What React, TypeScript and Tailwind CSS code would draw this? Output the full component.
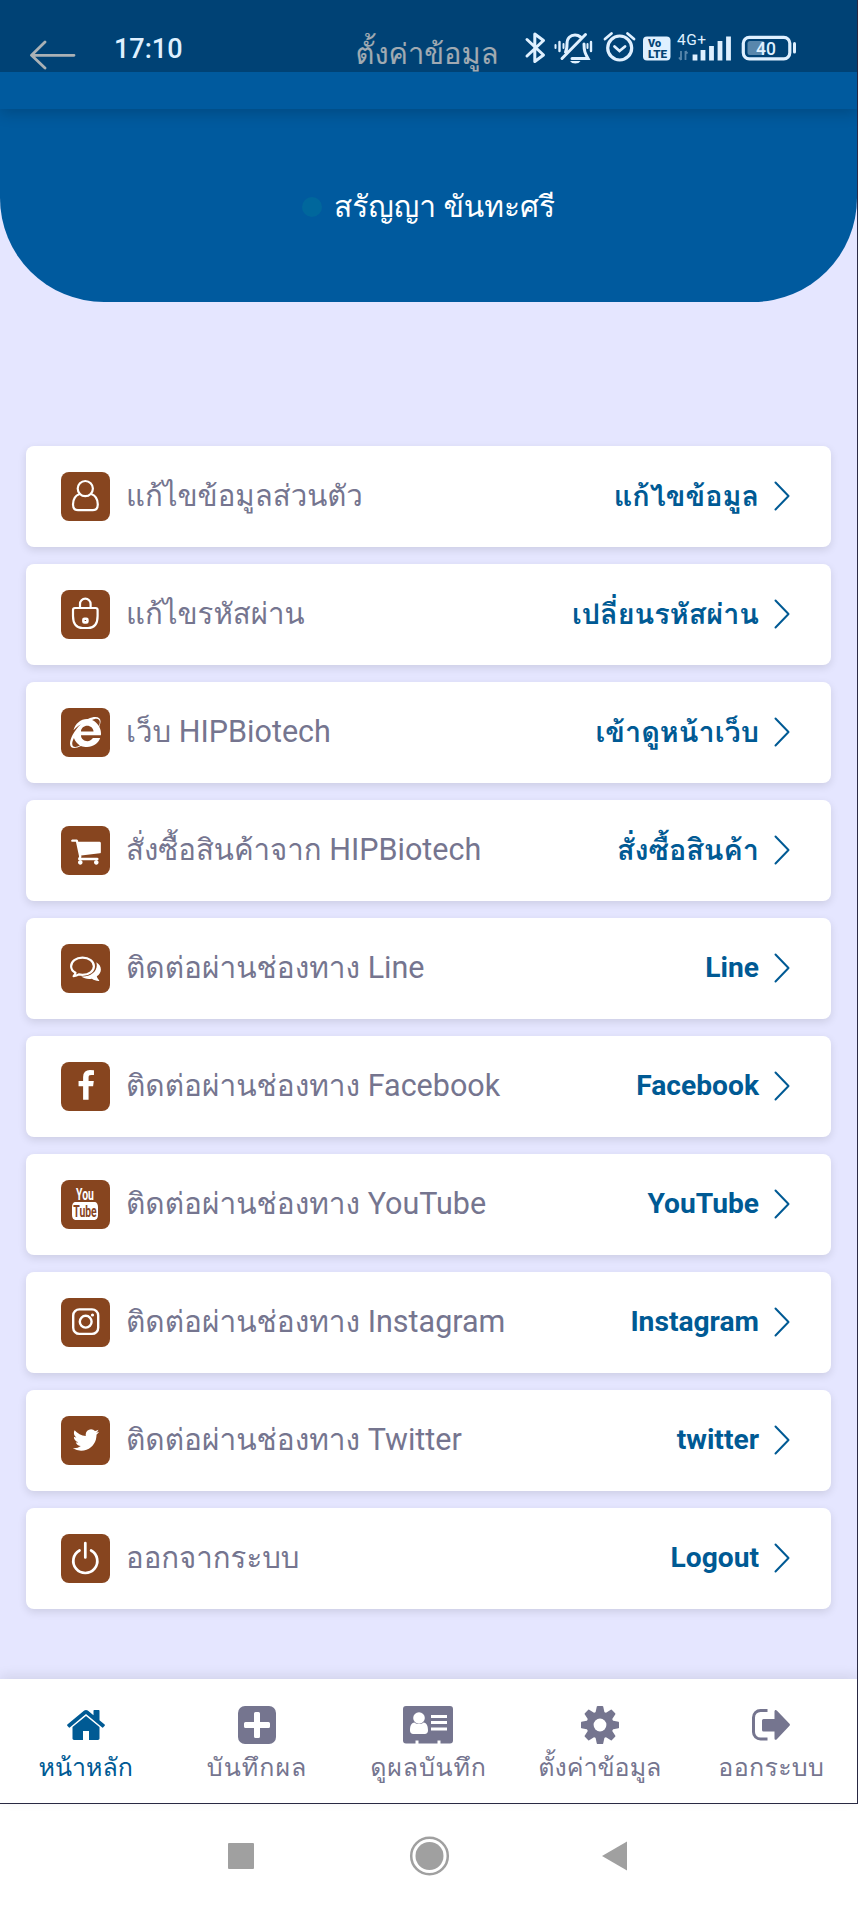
import type { ReactNode } from 'react';
import { FaInternetExplorer } from 'react-icons/fa';

const stroke = {
  fill: 'none',
  stroke: 'currentColor',
  strokeLinecap: 'round' as const,
  strokeLinejoin: 'round' as const,
};

const UserIcon = () => (
  <svg viewBox="0 0 49 49" className="h-full w-full" {...stroke} strokeWidth="2.2">
    <circle cx="24.3" cy="16.6" r="7.6" />
    <path d="M18.6 22c-4.500 1.600-6.600 5.500-6.600 10.500 0 3.400 1.800 5.600 5 5.600h14.800c3.200 0 5-2.200 5-5.600 0-5-2.100-8.900-6.600-10.500" />
  </svg>
);

const LockIcon = () => (
  <svg viewBox="0 0 49 49" className="h-full w-full" {...stroke} strokeWidth="2.2">
    <path d="M19 17v-3a5.300 5.300 0 0 1 10.600 0v3" />
    <path d="M14 18h20.600a2 2 0 0 1 2 2v6c0 8-3.600 12-9.600 12h-5.400c-6 0-9.600-4-9.600-12v-6a2 2 0 0 1 2-2z" />
    <rect x="22.400" y="28.800" width="4" height="3.600" rx="1" strokeWidth="2.600" />
  </svg>
);

const CartIcon = () => (
  <svg viewBox="0 0 1792 1792" className="h-[32px] w-[32px]" fill="currentColor">
    <path d="M704 1536q0 52-38 90t-90 38-90-38-38-90 38-90 90-38 90 38 38 90zm896 0q0 52-38 90t-90 38-90-38-38-90 38-90 90-38 90 38 38 90zm128-1088v512q0 24-16.500 42.500t-40.500 21.500l-1044 122q13 60 13 70 0 16-24 64h920q26 0 45 19t19 45-19 45-45 19h-1024q-26 0-45-19t-19-45q0-11 8-31.500t16-36 21.500-40 15.500-29.500l-177-823h-204q-26 0-45-19t-19-45 19-45 45-19h256q16 0 28.500 6.500t19.500 15.500 13 24.500 8 26 5.500 29.500 4.500 26h1201q26 0 45 19t19 45z" />
  </svg>
);

const ChatIcon = () => (
  <svg viewBox="0 0 49 49" className="h-full w-full" fill="currentColor">
    <path
      d="M21.500 13.600c6.600 0 11.400 3.900 11.400 8.600s-4.800 8.600-11.400 8.600c-1.400 0-2.500-.1-3.700-.4-1.700 1.200-3.400 1.600-5.200 1.800 1-1 1.600-2 1.900-3.400-2.800-1.600-4.400-4-4.400-6.600 0-4.700 4.800-8.600 11.400-8.600z"
      fill="none"
      stroke="currentColor"
      strokeWidth="2.200"
      strokeLinejoin="round"
    />
    <path d="M35.200 18.200c2.900 1.700 4.700 4.200 4.700 7.200 0 2.800-1.500 5.200-4.100 6.900.3 1.500 1 2.700 2.400 3.900.2.300 0 .8-.5.800-2.600-.1-4.800-.9-6.800-2.200-4.400.6-7.800-.2-10.700-2.300 8.800.5 15.600-4.300 15.600-11.200 0-1.100-.2-2.100-.6-3.100z" />
  </svg>
);

const FacebookIcon = () => (
  <svg viewBox="0 0 1792 1792" className="mb-[2px] h-[32px] w-[32px]" fill="currentColor">
    <path d="M1343 12v264h-157q-86 0-116 36t-30 108v189h293l-39 296h-254v759h-306v-759h-255v-296h255v-218q0-186 104-288.500t277-102.500q147 0 228 12z" />
  </svg>
);

const YouTubeIcon = () => (
  <div className="mr-[1px] mb-[2px] flex w-[40px] shrink-0 scale-x-[0.65] flex-col items-center text-[16px] leading-none font-bold">
    <span className="h-[14px] leading-[13px]">You</span>
    <span className="h-[18px] w-[40px] rounded-[5px] bg-white text-center leading-[19px] text-[#87451f]">Tube</span>
  </div>
);

const InstagramIcon = () => (
  <svg viewBox="0 0 49 49" className="h-full w-full" {...stroke} strokeWidth="2.400">
    <rect x="12.200" y="11.400" width="25" height="24.500" rx="6.200" />
    <circle cx="24.700" cy="23.700" r="5.900" />
    <circle cx="31.500" cy="17" r="1.600" fill="currentColor" stroke="none" />
  </svg>
);

const TwitterIcon = () => (
  <svg viewBox="0 0 1792 1792" className="mb-[2px] h-[30px] w-[30px]" fill="currentColor">
    <path d="M1684 408q-67 98-162 167 1 14 1 42 0 130-38 259.500t-115.500 248.500-184.500 210.500-258 146-323 54.500q-271 0-496-145 35 4 78 4 225 0 401-138-105-2-188-64.500t-114-159.500q33 5 61 5 43 0 85-11-112-23-185.500-111.500t-73.500-205.500v-4q68 38 146 41-66-44-105-115t-39-154q0-88 44-163 121 149 294.500 238.500t371.500 99.500q-8-38-8-74 0-134 94.500-228.500t228.500-94.500q140 0 236 102 109-21 205-78-37 115-142 178 93-10 186-50z" />
  </svg>
);

const PowerIcon = () => (
  <svg viewBox="0 0 49 49" className="h-full w-full" {...stroke} strokeWidth="2.700">
    <path d="M24.300 9v14.500M18.500 16.500a12 12 0 1 0 11.600 0" />
  </svg>
);

type Item = { icon: ReactNode; label: string; latin?: string; action: string; thaiAction?: boolean };

const items: Item[] = [
  { icon: <UserIcon />, label: 'แก้ไขข้อมูลส่วนตัว', action: 'แก้ไขข้อมูล', thaiAction: true },
  { icon: <LockIcon />, label: 'แก้ไขรหัสผ่าน', action: 'เปลี่ยนรหัสผ่าน', thaiAction: true },
  { icon: <FaInternetExplorer size={31} />, label: 'เว็บ', latin: 'HIPBiotech', action: 'เข้าดูหน้าเว็บ', thaiAction: true },
  { icon: <CartIcon />, label: 'สั่งซื้อสินค้าจาก', latin: 'HIPBiotech', action: 'สั่งซื้อสินค้า', thaiAction: true },
  { icon: <ChatIcon />, label: 'ติดต่อผ่านช่องทาง', latin: 'Line', action: 'Line' },
  { icon: <FacebookIcon />, label: 'ติดต่อผ่านช่องทาง', latin: 'Facebook', action: 'Facebook' },
  { icon: <YouTubeIcon />, label: 'ติดต่อผ่านช่องทาง', latin: 'YouTube', action: 'YouTube' },
  { icon: <InstagramIcon />, label: 'ติดต่อผ่านช่องทาง', latin: 'Instagram', action: 'Instagram' },
  { icon: <TwitterIcon />, label: 'ติดต่อผ่านช่องทาง', latin: 'Twitter', action: 'twitter' },
  { icon: <PowerIcon />, label: 'ออกจากระบบ', action: 'Logout' },
];

const HomeIcon = () => (
  <svg viewBox="0 0 1792 1792" className="h-[42px] w-[42px]" fill="currentColor">
    <path d="M1472 992v480q0 26-19 45t-45 19h-384v-384h-256v384h-384q-26 0-45-19t-19-45v-480q0-1 .5-3t.5-3l575-474 575 474q1 2 1 6zm223-69l-62 74q-8 9-21 11h-3q-13 0-21-7l-692-577-692 577q-12 8-24 7-13-2-21-11l-62-74q-8-10-7-23.500t11-21.500l719-599q32-26 76-26t76 26l244 204v-195q0-14 9-23t23-9h192q14 0 23 9t9 23v408l219 182q10 8 11 21.500t-7 23.500z" />
  </svg>
);

const PlusIcon = () => (
  <svg viewBox="0 0 38 38" className="h-[38px] w-[38px]" fill="currentColor">
    <rect width="38" height="38" rx="7" />
    <path d="M16 7.500a1.500 1.500 0 0 1 1.500-1.500h3A1.500 1.500 0 0 1 22 7.500V16h8.500a1.500 1.500 0 0 1 1.500 1.500v3a1.500 1.500 0 0 1-1.500 1.500H22v8.500a1.500 1.500 0 0 1-1.500 1.500h-3a1.500 1.500 0 0 1-1.500-1.500V22H7.500A1.500 1.500 0 0 1 6 20.500v-3A1.500 1.500 0 0 1 7.500 16H16z" fill="#fff" />
  </svg>
);

const CardIcon = () => (
  <svg viewBox="0 0 50 38" className="h-[38px] w-[50px]" fill="currentColor">
    <path d="M3 0h44a3 3 0 0 1 3 3v31.500a3 3 0 0 1-3 3h-9.500v-3h-3v3h-19v-3h-3v3H3a3 3 0 0 1-3-3V3a3 3 0 0 1 3-3z" />
    <g fill="#fff">
      <circle cx="16" cy="12" r="5.800" />
      <path d="M11.500 16.500c1.200 1 2.700 1.600 4.500 1.600s3.300-.6 4.500-1.600c3.300.4 4.500 3.500 4.500 8 0 2-1.300 3.500-3.200 3.500H10.200C8.300 28 7 26.500 7 24.500c0-4.500 1.200-7.600 4.500-8z" />
      <path d="M28 9h16v3H28zM28 15h16v3H28zM28 21.500h16v3H28z" />
    </g>
  </svg>
);

const GearIcon = () => (
  <svg viewBox="-19 -19 38 38" className="h-[38px] w-[38px]" fill="currentColor">
    {[0, 45, 90, 135].map((angle) => (
      <path
        key={angle}
        transform={`rotate(${angle})`}
        d="M-3.200-18.500q.2-.5.800-.5h4.800q.6 0 .8.500l1.400 6.500v24l-1.400 6.500q-.2.500-.8.500h-4.800q-.6 0-.8-.5l-1.400-6.500v-24z"
      />
    ))}
    <circle r="13.600" />
    <circle r="6.400" fill="#fff" />
  </svg>
);

const ExitIcon = () => (
  <svg viewBox="0 0 38 32" className="h-[32px] w-[38px]" fill="currentColor">
    <path d="M15.500 1.500H8.500a7 7 0 0 0-7 7v14.500a7 7 0 0 0 7 7h7" fill="none" stroke="currentColor" strokeWidth="3" />
    <path d="M22.500 2.500c0-1.600 1.200-2 2.300-1L37.500 14.800q.9 1 0 2L24.800 30.300c-1.100 1-2.300.6-2.300-1V22.500h-11a1.500 1.500 0 0 1-1.500-1.500V11.500a1.500 1.500 0 0 1 1.500-1.500h11z" />
  </svg>
);

const tabs = [
  { icon: <HomeIcon />, label: 'หน้าหลัก', color: 'text-[#005a94]', tracking: 'tracking-normal' },
  { icon: <PlusIcon />, label: 'บันทึกผล', color: 'text-[#75758f]', tracking: 'tracking-[1px]' },
  { icon: <CardIcon />, label: 'ดูผลบันทึก', color: 'text-[#75758f]', tracking: 'tracking-[0.8px]' },
  { icon: <GearIcon />, label: 'ตั้งค่าข้อมูล', color: 'text-[#75758f]', tracking: 'tracking-normal' },
  { icon: <ExitIcon />, label: 'ออกระบบ', color: 'text-[#75758f]', tracking: 'tracking-[0.3px]' },
];

function StatusBar() {
  return (
    <div className="absolute inset-x-0 top-0 flex h-[72px] items-start bg-black/26 text-[#dff0ff]">
      <span className="mt-[32px] ml-[114px] w-[405px] text-[27px] leading-[34px] font-medium">17:10</span>
      <svg width="290" height="72" viewBox="520 0 290 72" fill="none" stroke="currentColor">
        {/* bluetooth */}
        <path d="M528 39.500l16.500 15.500-8.700 6.500V34l8.700 6.500L528 56" strokeWidth="3" strokeLinejoin="round" strokeLinecap="round" />
        {/* muted bell */}
        <g strokeWidth="3" strokeLinecap="round">
          <path d="M566.500 52c1.500-2.500 1.500-4.500 1.500-8 0-6 3.500-9 8-9 2 0 4 .7 5.500 2M585 44c0 7 1 9 4 14.500h-16M563 58.500L586.500 34.500" />
          <path d="M560.500 42v9M592 42v9" strokeWidth="2.400" />
          <path d="M564.500 44v4M588.500 44v4M556.500 45v3" strokeWidth="2" />
        </g>
        <path d="M571 61h10.500q-1.500 2.500-5.200 2.500t-5.300-2.500z" fill="currentColor" stroke="none" />
        {/* alarm */}
        <circle cx="620.700" cy="48" r="12" strokeWidth="3.200" />
        <path d="M615.500 46.500l5 4.500 5.500-4.500M606 39l6.500-5.500M635 39l-6.500-5.500" strokeWidth="2.800" strokeLinecap="round" />
        {/* VoLTE */}
        <rect x="644" y="36.500" width="27.500" height="24" rx="4" fill="currentColor" stroke="none" />
        <g fill="#044373" stroke="none" className="font-black">
          <text x="649" y="47" fontSize="10.500" textLength="13" lengthAdjust="spacingAndGlyphs">Vo</text>
          <text x="649" y="57.500" fontSize="10.500" textLength="19" lengthAdjust="spacingAndGlyphs">LTE</text>
        </g>
        {/* signal */}
        <text x="678" y="45" fontSize="15.500" fill="currentColor" stroke="none" textLength="29">4G+</text>
        <path d="M682 51v9M680 57.500l2 2.500M686.500 51v9M688.500 53.500l-2-2.500" strokeWidth="1.800" opacity=".4" />
        <path d="M696 60.500v-6M704 60.500v-10.500M712.500 60.500v-14.500M721 60.500v-19.500M729.500 60.500v-24" strokeWidth="4.800" />
        {/* battery */}
        <rect x="744.300" y="37.300" width="46.500" height="21.500" rx="6" strokeWidth="3.200" />
        <rect x="748.500" y="41" width="17" height="14" rx="2.500" fill="currentColor" fillOpacity=".4" stroke="none" />
        <path d="M795.500 43.500v8.500" strokeWidth="3" strokeLinecap="round" />
        <text x="757" y="54.500" fontSize="17.500" fill="currentColor" stroke="none" className="font-medium" textLength="20">40</text>
      </svg>
    </div>
  );
}

function App() {
  return (
    <div className="flex h-[1907px] w-[858px] flex-col bg-white font-[Roboto,Loma,'Noto_Sans',sans-serif]">
      <div className="flex h-[1804px] flex-col border-r border-b border-[#2b2b45] bg-[#e5e6ff]">
        <div className="relative z-10 flex h-[109px] shrink-0 items-center bg-[#005a9e] shadow-[0_4px_14px_rgba(0,0,0,0.18)]">
          <svg viewBox="0 0 46 30" className="ml-[30px] h-[30px] w-[46px] shrink-0 text-white/90" {...stroke} strokeWidth="2.800">
            <path d="M44 15.300H1.500M15 2L1.500 15.300 15 28" />
          </svg>
          <h1 className="mr-[79px] mb-[2px] flex-1 text-center text-[29px] leading-[40px] text-white/85">ตั้งค่าข้อมูล</h1>
          <StatusBar />
        </div>
        <div className="flex h-[193px] shrink-0 items-center justify-center gap-3 rounded-b-[104px] bg-[#005a9e] pt-[3px]">
          <span className="h-5 w-5 rounded-full bg-[#00679c]" />
          <span className="text-[29.900px] leading-[40px] text-white">สรัญญา ขันทะศรี</span>
        </div>

        <div className="mt-[144px] flex flex-col gap-[17px] px-[26px]">
          {items.map((item) => (
            <div
              key={item.label + item.latin}
              className="flex h-[101px] items-center rounded-lg bg-white pr-[41px] pl-[35px] shadow-[0_3px_8px_rgba(0,0,0,0.11)]"
            >
              <div className="flex h-[49px] w-[49px] items-center justify-center rounded-[8px] bg-[#87451f] text-white">
                {item.icon}
              </div>
              <p className="mb-[2px] ml-[16px] flex-1 text-[30.500px] leading-[40px] whitespace-nowrap text-[#75758f]">
                <span className={item.action === item.latin || item.latin === 'Twitter' ? 'text-[29.800px]' : 'text-[29.400px]'}>
                  {item.label}
                </span>{' '}
                {item.latin}
              </p>
              <span
                className={`mb-[2px] leading-[40px] font-bold whitespace-nowrap text-[#005a94] ${item.thaiAction ? 'text-[28.800px]' : 'text-[28.200px]'}`}
              >
                {item.action}
              </span>
              <svg viewBox="0 0 16 30" className="mb-[2px] ml-[15px] h-[30px] w-[16px] text-[#005a94]" {...stroke} strokeWidth="2">
                <path d="M1.500 1.500L14.500 15 1.500 28.500" />
              </svg>
            </div>
          ))}
        </div>

        <nav className="mt-auto grid h-[124px] shrink-0 grid-cols-5 bg-white shadow-[0_-3px_12px_rgba(0,0,0,0.09)]">
          {tabs.map((tab) => (
            <div key={tab.label} className={`flex flex-col items-center pt-[26px] ${tab.color}`}>
              <div className="flex h-[40px] items-center">{tab.icon}</div>
              <span className={`mt-[5px] text-[25px] leading-[36px] whitespace-nowrap ${tab.tracking}`}>{tab.label}</span>
            </div>
          ))}
        </nav>
      </div>

      <div className="flex flex-1 items-center justify-center text-[#a0a0a0]">
        <svg viewBox="0 0 402 40" className="h-[40px] w-[402px]" fill="currentColor">
          <rect x="0" y="7" width="26" height="26" rx="1" />
          <circle cx="201.500" cy="20" r="18.300" fill="none" stroke="currentColor" strokeWidth="2.500" />
          <circle cx="201.500" cy="20" r="14" />
          <path d="M374 20L399 5.500v29z" />
        </svg>
      </div>
    </div>
  );
}

export default App;
